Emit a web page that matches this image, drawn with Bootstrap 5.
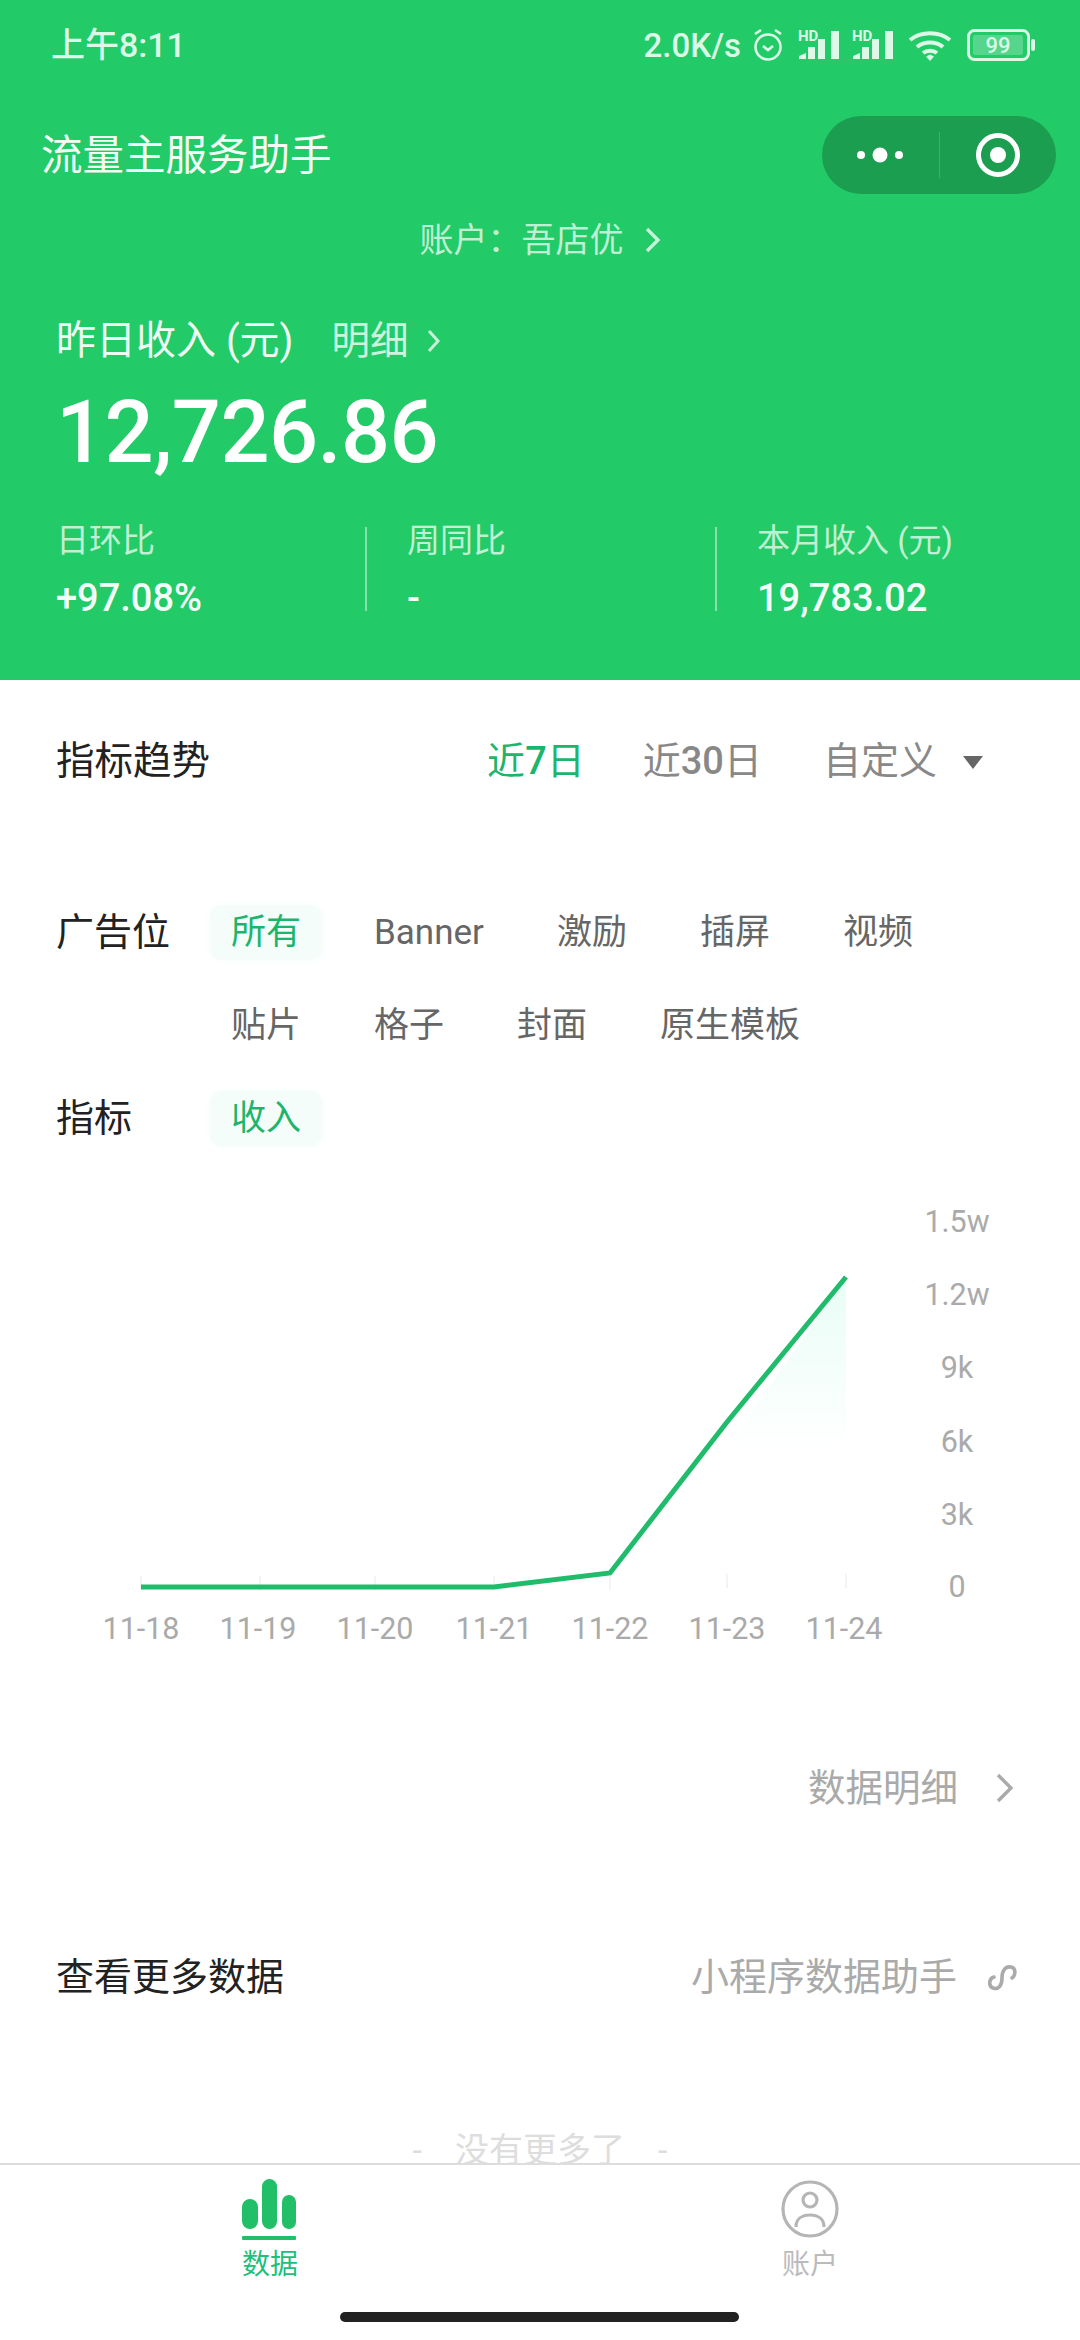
<!doctype html>
<html lang="zh">
<head>
<meta charset="utf-8">
<title>流量主服务助手</title>
<link href="https://cdn.jsdelivr.net/npm/bootstrap@5.3.0/dist/css/bootstrap.min.css" rel="stylesheet">
<style>
html,body{height:2340px;overflow:hidden;background:#fff}
body{font-family:Roboto,"Noto Sans CJK SC",sans-serif;color:#222;width:1080px}
.app-root{height:2340px;position:relative;overflow:hidden}
.hero{height:680px;background:#22cb67;color:#fff}
.status-row{height:90px;padding:0 44px 0 51px;color:#dcf8e7}
.status-time{font-size:34px;font-weight:500;line-height:1}
.status-speed{font-size:33px;font-weight:500;line-height:1}
.gap-a{margin-left:12px}
.gap-b{margin-left:15px}
.gap-c{margin-left:10px}
.nav-row{height:130px;padding:0 24px 0 41px}
.nav-title{font-size:41.5px;line-height:1;color:#f2fdf6;margin-top:2px}
.capsule{width:234px;height:78px;border-radius:39px;background:#1c9e50}
.capsule-half{width:117px;height:100%}
.capsule-sep{width:1px;height:46px;background:#38b368}
.acct{height:40px;font-size:34px;line-height:40px;color:rgba(255,255,255,.72);margin-left:1px}
.acct svg{margin-left:20px}
.hero-sum{padding:56px 0 0 56px}
.sum-label{font-size:40px;line-height:50px;color:#eefcf3}
.sum-link{font-size:38.5px;color:rgba(255,255,255,.78);margin-left:38px}
.sum-label svg{margin-left:17px}
.sum-value{font-size:86.5px;font-weight:500;line-height:100px;margin-top:17px;letter-spacing:-.6px}
.stat-row{margin-top:44px;height:92px}
.stat-cell{width:350px;height:84px}
.stat-cell+.stat-cell{border-left:2px solid rgba(255,255,255,.45);padding-left:40px}
.stat-cell.first{width:309px}
.stat-cell.second{width:350px}
.stat-key{font-size:33px;line-height:36px;color:rgba(255,255,255,.72);margin-top:-4px}
.stat-val{font-size:38px;font-weight:500;line-height:40px;margin-top:19px;color:#f4fef8}
.body-pad{padding:0 56px}
.trend-row{height:225px;padding-top:56px;align-items:flex-start}
.trend-title{font-size:38.5px;line-height:50px}
.range{font-size:38px;line-height:50px;color:#888}
.range b{font-weight:500}
.range.on{color:#1db56b}
.range-gap-a{margin-left:58px}
.range-gap-b{margin-left:61px}
.range-arrow{width:0;height:0;border-left:10px solid transparent;border-right:10px solid transparent;border-top:13px solid #666;margin:3px 41px 0 26px}
.filter-row{gap:0}
.filter-key{font-size:38px;line-height:55px;width:154px;flex:none}
.chip-wrap{display:flex;flex-wrap:wrap;column-gap:31px;row-gap:38px}
.chip-item{font-size:35px;line-height:55px;color:#666;white-space:nowrap;padding:0 21px;border-radius:12px}
.chip-item.on{background:#f5fdfb;box-shadow:0 0 8px #f5fdfb;color:#1db56b}
.metric-row{margin-top:38px}
.chart-box{margin-top:34px;height:490px}
.chart-box svg{display:block}
.axis-text{font-family:Roboto,sans-serif;font-size:30.5px;fill:#aaa}
.detail-row{height:54px;margin-top:91px;padding-right:66px;font-size:37.5px;line-height:54px;color:#aaa}
.detail-row svg{margin-left:37px}
.more-row{margin-top:135px;height:54px}
.more-title{font-size:38px;line-height:54px}
.more-link{font-size:38px;line-height:54px;color:#aaa}
.more-link svg{margin:0 7px 0 30px}
.end-note{margin-top:126px;font-size:34px;line-height:40px;color:#ddd}
.end-dash{margin:0 33px}
.tabbar{position:absolute;left:0;right:0;bottom:0;height:177px;background:#fff;border-top:2px solid #ddd}
.tab-cell{width:540px;padding-top:13px}
.tab-icon{width:60px;height:64px;display:block}
.tab-label{font-size:28px;line-height:32px;margin-top:7px;color:#bbb}
.tab-label.on{color:#1cc07a}
.home-bar{position:absolute;left:340px;top:2312px;width:399px;height:10px;border-radius:5px;background:#222}
</style>
</head>
<body>
<div class="app-root">
<header class="hero">
  <div class="status-row d-flex align-items-center justify-content-between">
    <div class="status-time">上午8:11</div>
    <div class="d-flex align-items-center">
      <span class="status-speed">2.0K/s</span>
      <svg class="gap-a" width="30" height="34" viewBox="0 0 30 34" fill="none" stroke="#dcf8e7" stroke-width="2.6"><circle cx="15" cy="19" r="12.5"/><path d="M10 18l5 4 5-4"/><path d="M2 6l6-4M28 6l-6-4"/></svg>
      <svg class="gap-b" width="44" height="32" viewBox="0 0 44 32" fill="#dcf8e7"><text x="0" y="12" font-size="15" font-family="Roboto" font-weight="700">HD</text><path d="M1 30v-3l7-3v6zM10 30V18h7v12zM20 30V10h7v20zM33 30V2h8v28z"/></svg>
      <svg class="gap-c" width="44" height="32" viewBox="0 0 44 32" fill="#dcf8e7"><text x="0" y="12" font-size="15" font-family="Roboto" font-weight="700">HD</text><path d="M1 30v-3l7-3v6zM10 30V18h7v12zM20 30V10h7v20zM33 30V2h8v28z"/></svg>
      <svg class="gap-a" width="44" height="32" viewBox="0 0 44 32" fill="none" stroke="#dcf8e7" stroke-width="4"><path d="M2 11c11-9 29-9 40 0M9 18c7-6 19-6 26 0M15 24c4-3 10-3 14 0"/><path d="M18 27.500l4-2 4 2-4 4.500z" fill="#dcf8e7" stroke="none"/></svg>
      <svg class="gap-b" width="69" height="32" viewBox="0 0 69 32"><rect x="1.500" y="1.500" width="60" height="29" rx="6" fill="none" stroke="#dcf8e7" stroke-width="3"/><rect x="6" y="6" width="50" height="20" rx="2" fill="#55d68c"/><text x="31" y="24" text-anchor="middle" font-family="Roboto" font-weight="500" font-size="22" fill="#dcf8e7">99</text><rect x="64" y="10" width="4" height="12" rx="2" fill="#dcf8e7"/></svg>
    </div>
  </div>
  <div class="nav-row d-flex align-items-center justify-content-between">
    <div class="nav-title">流量主服务助手</div>
    <div class="capsule d-flex align-items-center">
      <div class="capsule-half d-flex align-items-center justify-content-center">
        <svg width="48" height="18" viewBox="0 0 48 18" fill="#fff"><circle cx="5" cy="9" r="4"/><circle cx="24" cy="9" r="7.500"/><circle cx="43" cy="9" r="4"/></svg>
      </div>
      <div class="capsule-sep"></div>
      <div class="capsule-half d-flex align-items-center justify-content-center">
        <svg width="44" height="44" viewBox="0 0 44 44"><circle cx="22" cy="22" r="19.500" fill="none" stroke="#fff" stroke-width="5"/><circle cx="22" cy="22" r="8" fill="#fff"/></svg>
      </div>
    </div>
  </div>
  <div class="acct d-flex align-items-center justify-content-center">账户：吾店优<svg width="18" height="28" viewBox="0 0 18 28" fill="none" stroke="rgba(255,255,255,.75)" stroke-width="3.400"><path d="M3 3l11 11L3 25"/></svg></div>
  <div class="hero-sum">
    <div class="sum-label d-flex align-items-center">昨日收入 (元)<span class="sum-link">明细</span><svg width="16" height="26" viewBox="0 0 16 26" fill="none" stroke="rgba(255,255,255,.75)" stroke-width="3"><path d="M3 3l9 10-9 10"/></svg></div>
    <div class="sum-value">12,726.86</div>
    <div class="stat-row d-flex">
      <div class="stat-cell first"><div class="stat-key">日环比</div><div class="stat-val">+97.08%</div></div>
      <div class="stat-cell second"><div class="stat-key">周同比</div><div class="stat-val">-</div></div>
      <div class="stat-cell"><div class="stat-key">本月收入 (元)</div><div class="stat-val">19,783.02</div></div>
    </div>
  </div>
</header>
<main>
  <div class="body-pad">
    <div class="trend-row d-flex justify-content-between">
      <div class="trend-title">指标趋势</div>
      <div class="d-flex align-items-center">
        <span class="range on">近<b>7</b>日</span>
        <span class="range range-gap-a">近<b>30</b>日</span>
        <span class="range range-gap-b">自定义</span>
        <span class="range-arrow"></span>
      </div>
    </div>
    <div class="d-flex filter-row">
      <div class="filter-key">广告位</div>
      <div class="chip-wrap">
        <span class="chip-item on">所有</span><span class="chip-item">Banner</span><span class="chip-item">激励</span><span class="chip-item">插屏</span><span class="chip-item">视频</span>
        <span class="chip-item">贴片</span><span class="chip-item">格子</span><span class="chip-item">封面</span><span class="chip-item">原生模板</span>
      </div>
    </div>
    <div class="d-flex filter-row metric-row">
      <div class="filter-key">指标</div>
      <div class="chip-wrap"><span class="chip-item on">收入</span></div>
    </div>
  </div>
  <div class="chart-box">
    <svg width="1080" height="490" viewBox="0 1180 1080 490">
      <defs><linearGradient id="areaFill" x1="0" y1="0" x2="0" y2="1"><stop offset="0" stop-color="#e8fdf6"/><stop offset="1" stop-color="#ffffff"/></linearGradient></defs>
      <polygon points="846,1277 846,1450 725,1450" fill="url(#areaFill)"/>
      <g stroke="#e8e8e8" stroke-width="1"><path d="M141 1576v14M260 1576v14M375 1576v14M494 1576v14M610 1576v14M727 1574v14M846 1574v14"/></g>
      <polyline points="141,1587 494,1587 610,1573 727,1422 846,1277" fill="none" stroke="#20bc6b" stroke-width="5"/>
      <g class="axis-text" text-anchor="middle">
        <text x="957" y="1232">1.5w</text><text x="957" y="1305">1.2w</text><text x="957" y="1378">9k</text><text x="957" y="1452">6k</text><text x="957" y="1525">3k</text><text x="957" y="1597">0</text>
        <text x="141" y="1639">11-18</text><text x="258" y="1639">11-19</text><text x="375" y="1639">11-20</text><text x="494" y="1639">11-21</text><text x="610" y="1639">11-22</text><text x="727" y="1639">11-23</text><text x="844" y="1639">11-24</text>
      </g>
    </svg>
  </div>
  <div class="detail-row d-flex align-items-center justify-content-end">数据明细<svg width="19" height="32" viewBox="0 0 19 32" fill="none" stroke="#aaa" stroke-width="3.400"><path d="M3 3l13 13L3 29"/></svg></div>
  <div class="body-pad more-row d-flex align-items-center justify-content-between">
    <span class="more-title">查看更多数据</span>
    <span class="more-link d-flex align-items-center">小程序数据助手<svg width="30" height="28" viewBox="0 0 30 28" fill="none" stroke="#aaa" stroke-width="3.600" stroke-linecap="round"><path d="M7 14c-5 1-6 9-1 11 6 2 9-3 9-10 0-7 3-12 9-11 5 1 5 8 1 11"/></svg></span>
  </div>
  <div class="end-note d-flex justify-content-center"><span class="end-dash">-</span>没有更多了<span class="end-dash">-</span></div>
</main>
<nav class="tabbar d-flex">
  <div class="tab-cell d-flex flex-column align-items-center">
    <svg class="tab-icon" viewBox="0 0 60 64"><g fill="#20bf68"><rect x="2" y="21" width="16" height="30" rx="8"/><rect x="22" y="1" width="15" height="50" rx="7.500"/><rect x="42" y="17" width="14" height="34" rx="7"/><rect x="2" y="58" width="54" height="4" rx="1"/></g></svg>
    <div class="tab-label on">数据</div>
  </div>
  <div class="tab-cell d-flex flex-column align-items-center">
    <svg class="tab-icon" viewBox="0 0 60 64" fill="none" stroke="#b5b5b5" stroke-width="3.200"><circle cx="30" cy="31" r="27"/><circle cx="30" cy="22" r="7"/><path d="M16 49c0-8 6-12 14-12s14 4 14 12"/></svg>
    <div class="tab-label">账户</div>
  </div>
</nav>
<div class="home-bar"></div>
</div>
</body>
</html>
